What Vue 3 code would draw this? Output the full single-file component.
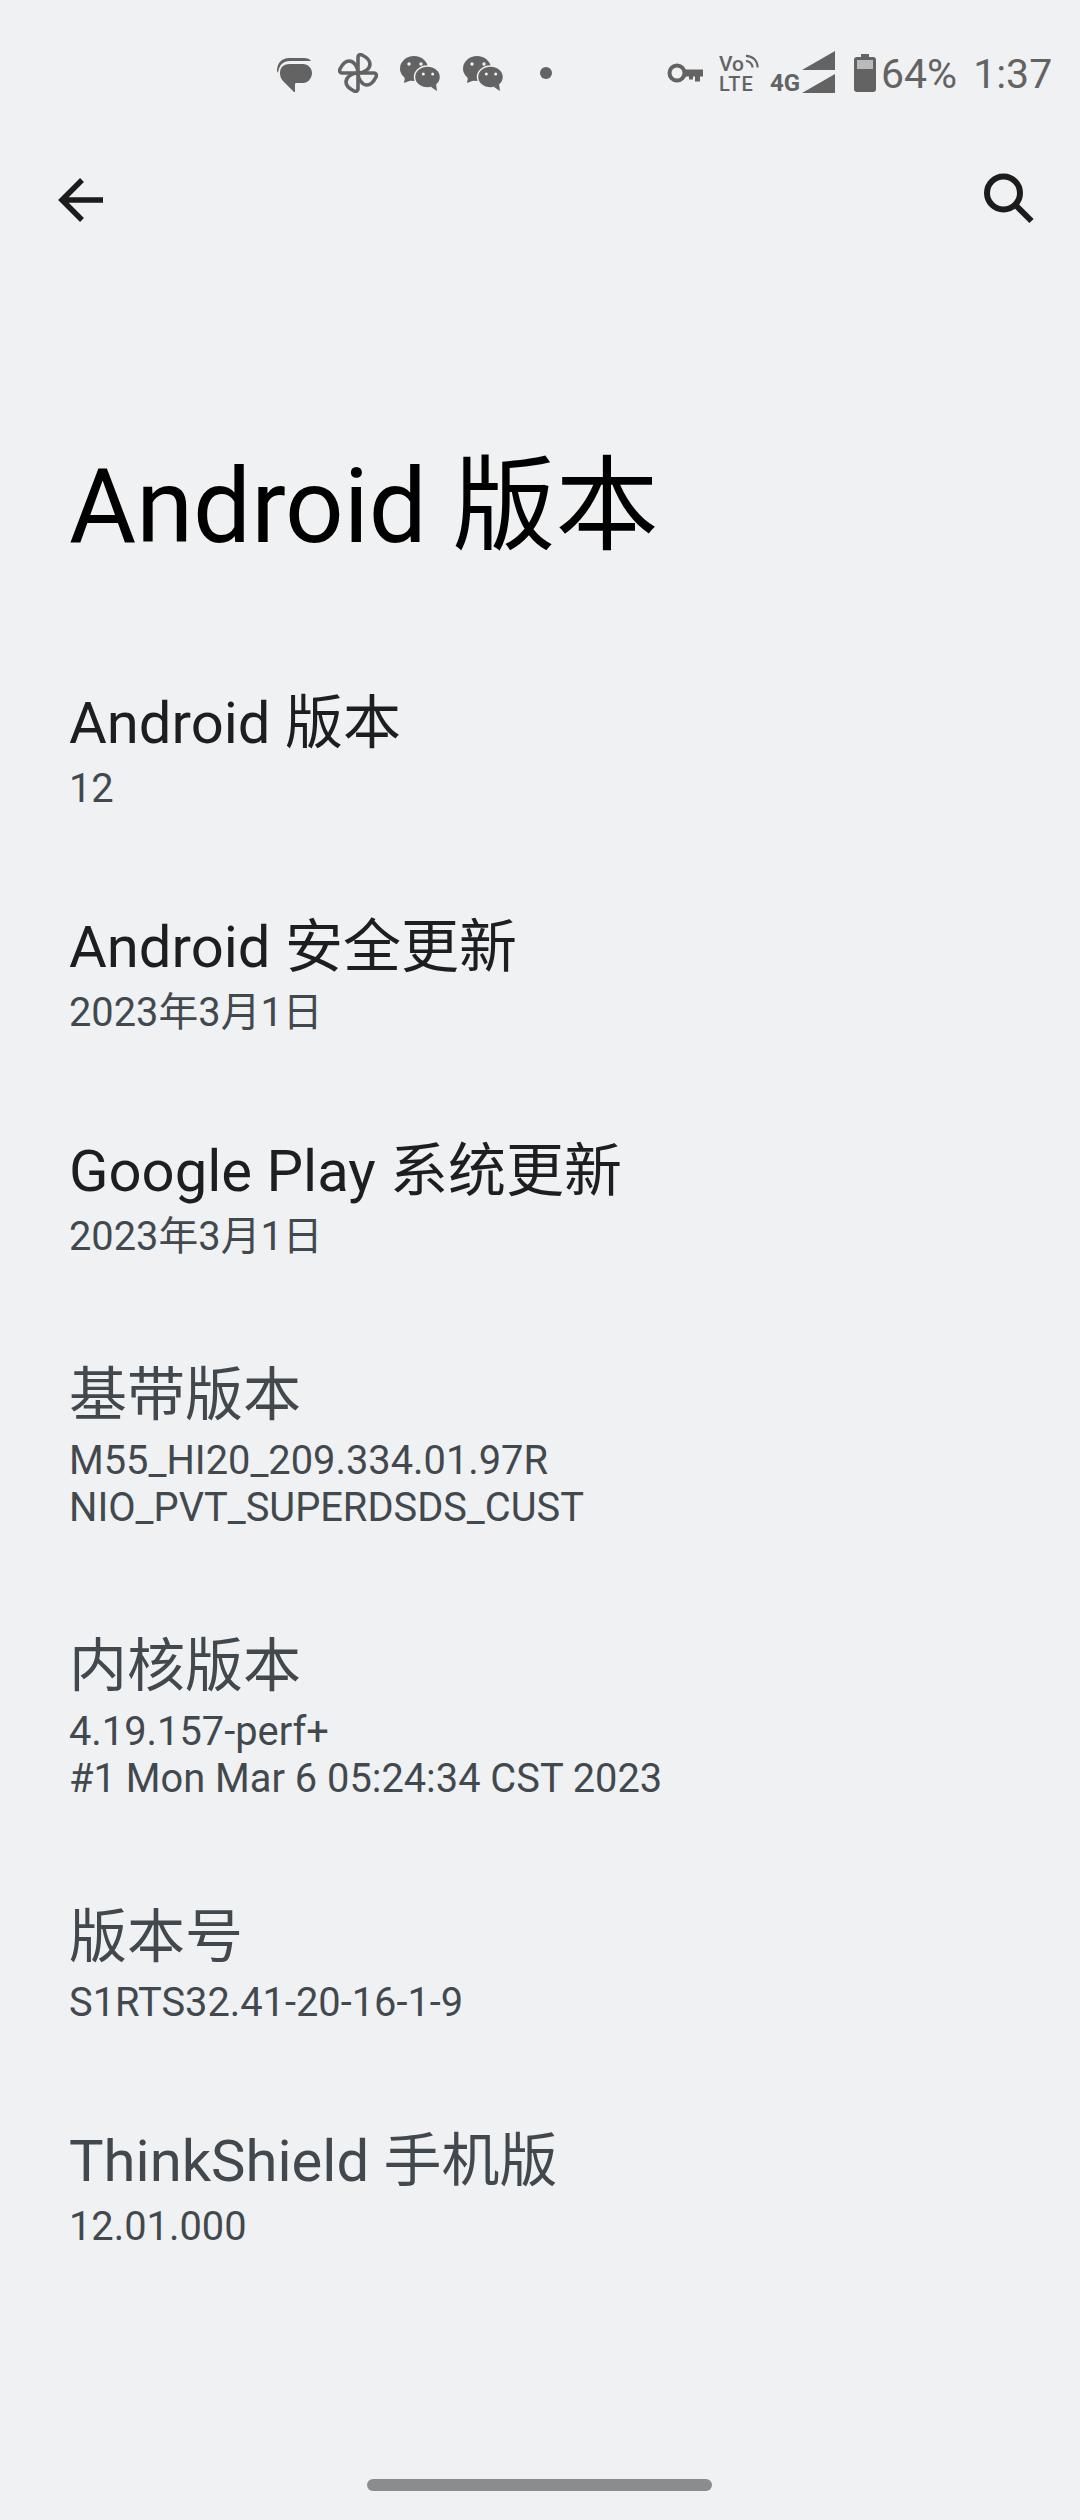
<script setup>
const rows = [
  { t: 'Android 版本', s: ['12'], dark: true },
  { t: 'Android 安全更新', s: ['2023年3月1日'], dark: true },
  { t: 'Google Play 系统更新', s: ['2023年3月1日'], dark: true },
  { t: '基带版本', s: ['M55_HI20_209.334.01.97R', 'NIO_PVT_SUPERDSDS_CUST'] },
  { t: '内核版本', s: ['4.19.157-perf+', '#1 Mon Mar 6 05:24:34 CST 2023'] },
  { t: '版本号', s: ['S1RTS32.41-20-16-1-9'] },
  { t: 'ThinkShield 手机版', s: ['12.01.000'] },
]
</script>

<template>
  <div class="page">
    <div class="status">
      <svg class="msg" viewBox="0 0 36 34" width="36" height="34">
        <path d="M0 13C0 5 5 0 12 0h15c3 0 6 1 7 3H13C6 3 2 7 1 15Z" fill="#636363"/>
        <path d="M3 15c0-6 4-9 10-9h13c5 0 9 4 9 9s-4 10-9 10h-7c-1 0-1 1-1 2v7h-1L6 23c-2-2-3-5-3-8Z" fill="#636363"/>
      </svg>
      <svg class="pin" viewBox="0 0 40 40" width="40" height="40">
        <g fill="none" stroke="#636363" stroke-width="3.600" stroke-linejoin="round">
          <path d="M20 20V4c0-2 2-3 4-2 4 2 8 5 8 9 0 5-6 9-12 9Z"/>
          <path d="M20 20V4c0-2 2-3 4-2 4 2 8 5 8 9 0 5-6 9-12 9Z" transform="rotate(90 20 20)"/>
          <path d="M20 20V4c0-2 2-3 4-2 4 2 8 5 8 9 0 5-6 9-12 9Z" transform="rotate(180 20 20)"/>
          <path d="M20 20V4c0-2 2-3 4-2 4 2 8 5 8 9 0 5-6 9-12 9Z" transform="rotate(270 20 20)"/>
        </g>
      </svg>
      <svg v-for="i in 2" :key="i" class="chat" viewBox="0 0 42 36" width="42" height="36">
        <ellipse cx="14" cy="12.500" rx="14" ry="12.500" fill="#636363"/>
        <path d="M5 21l-1 6 8-3Z" fill="#636363"/>
        <ellipse cx="27.500" cy="21" rx="13" ry="11" fill="#636363" stroke="#f0f1f3" stroke-width="1.500"/>
        <path d="M31 31l6 4-1-7Z" fill="#636363"/>
        <circle cx="9" cy="8" r="1.700" fill="#f0f1f3"/>
        <circle cx="21" cy="8" r="1.700" fill="#f0f1f3"/>
        <circle cx="23.300" cy="18" r="1.500" fill="#f0f1f3"/>
        <circle cx="32.700" cy="18" r="1.500" fill="#f0f1f3"/>
      </svg>
      <span class="dot"></span>
      <svg class="key" viewBox="0 0 36 20" width="36" height="20">
        <circle cx="10" cy="10" r="7.500" fill="none" stroke="#636363" stroke-width="4"/>
        <path d="M17 6.500h19v7h-3v5h-5v-5h-2v3h-4v-3h-5Z" fill="#636363"/>
      </svg>
      <div class="volte">
        <div class="vo">Vo<svg viewBox="0 0 15 15" width="15" height="15" fill="none" stroke="#636363" stroke-width="2.200"><path d="M1 1.500c7 0 12.500 5 12.500 12.500M1 7c4 0 7 3 7 7"/></svg></div>
        <div class="lte">LTE</div>
      </div>
      <span class="fg">4G</span>
      <svg class="sig" viewBox="0 0 34 42" width="34" height="42">
        <path d="M0 19 33 0v19ZM0 42l33-19v19Z" fill="#636363"/>
      </svg>
      <svg class="bat" viewBox="0 0 22 38" width="22" height="38">
        <path d="M7 0h8v3h4c2 0 3 1 3 3v29c0 2-1 3-3 3H3c-2 0-3-1-3-3V6c0-2 1-3 3-3h4Z" fill="#636363"/>
        <rect x="3" y="6" width="16" height="9" fill="#b9babc"/>
      </svg>
      <span class="clock pct">64%</span>
      <span class="clock">1:37</span>
    </div>
    <div class="toolbar">
      <svg viewBox="0 0 56 56" width="56" height="56" fill="none" stroke="#1c1c1c" stroke-width="5.500">
        <path d="M47 28H6M26 8 6 28 26 48"/>
      </svg>
      <svg viewBox="0 0 56 56" width="56" height="56" fill="none" stroke="#1c1c1c" stroke-width="6">
        <circle cx="23.500" cy="21" r="16.500"/>
        <path d="M35.500 33l16 16"/>
      </svg>
    </div>
    <h1>Android 版本</h1>
    <div class="list">
      <div v-for="r in rows" :key="r.t" class="row" :class="{ dark: r.dark }">
        <div class="title">{{ r.t }}</div>
        <div v-for="l in r.s" :key="l" class="sub">{{ l }}</div>
      </div>
    </div>
    <div class="handle"></div>
  </div>
</template>

<style>
html, body { margin: 0; background: #f0f1f3; }
</style>

<style scoped>
.page {
  width: 1080px;
  height: 2520px;
  display: flex;
  flex-direction: column;
  overflow: hidden;
  background: #f0f1f3;
  font-family: Roboto, "Noto Sans CJK SC", sans-serif;
}
.status {
  height: 104px;
  box-sizing: border-box;
  padding-left: 277px;
  display: flex;
  align-items: flex-start;
  color: #636363;
}
.msg { margin-top: 58px; }
.pin { margin: 53px 0 0 25px; }
.chat { margin: 56px 0 0 22px; }
.chat + .chat { margin-left: 21px; }
.dot { width: 12px; height: 12px; border-radius: 50%; background: #636363; margin: 67px 0 0 35px; }
.key { margin: 63px 0 0 115px; }
.volte { width: 40px; margin: 54px 0 0 16px; font-weight: 500; }
.vo { display: flex; align-items: flex-start; font-size: 21px; line-height: 20px; }
.vo svg { margin-left: 1px; }
.lte { font-size: 20px; line-height: 20px; letter-spacing: 1px; }
.fg { font-size: 24px; line-height: 24px; font-weight: 700; margin: 71px 0 0 11px; width: 30px; }
.sig { margin: 51px 0 0 2px; }
.bat { margin: 54px 0 0 18px; }
.clock { font-size: 41px; line-height: 48px; margin-top: 50px; }
.pct { margin: 50px 16px 0 5px; }
.toolbar {
  display: flex;
  justify-content: space-between;
  padding: 68px 44px 0 56px;
}
h1 {
  margin: 219px 0 0;
  padding: 0 69px;
  font-size: 103px;
  font-weight: 400;
  line-height: 120px;
  color: #000;
}
.list { padding: 122px 69px 0; }
.row { padding-bottom: 101px; color: #42494e; }
.title { font-size: 58px; line-height: 68px; margin-bottom: 8px; }
.dark .title { color: #1c1f21; }
.sub { font-size: 39.8px; line-height: 47px; }
.handle {
  margin: auto 0 29px 367px;
  width: 345px;
  height: 12px;
  border-radius: 6px;
  background: #8b8c8d;
}
</style>
